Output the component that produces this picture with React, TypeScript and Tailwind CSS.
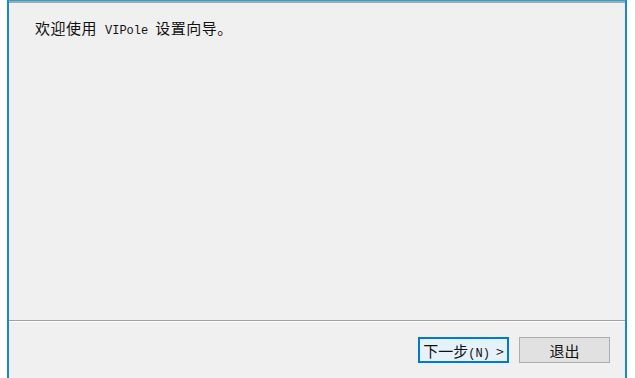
import React from "react";

const cjk = { fontFamily: '"Noto Sans CJK SC", "Noto Sans", sans-serif' };
const mono = { fontFamily: '"Liberation Mono", "DejaVu Sans Mono", monospace' };

export default function App() {
  return (
    <div className="w-[635px] h-[378px] bg-white flex overflow-hidden">
      <div className="ml-[7px] w-[620px] h-full flex flex-col border-l-2 border-r-2 border-t border-[#1a84dc] border-t-[#2aa0d8]">
        <div className="h-[2px] bg-[#a8a8a8]" />
        <div className="flex-1 bg-[#f0f0f0] flex flex-col">
          <div className="flex-1 pl-[26px] pt-[15px]">
            <div className="flex items-baseline text-[15px] leading-[20px] text-[#111]" style={cjk}>
              <span className="tracking-[0.5px]">欢迎使用</span>
              <span className="text-[12px] ml-[8px] mr-[7px] text-[#111]" style={mono}>VIPole</span>
              <span className="tracking-[0.5px]">设置向导。</span>
            </div>
          </div>
          <div className="h-px bg-[#a0a0a0]" />
          <div className="h-px bg-white" />
          <div className="h-[56px] flex justify-end items-start pt-[15px] pr-[15px] gap-[10px]">
            <button
              className="w-[91px] h-[26px] border-2 border-[#0078d7] bg-[#e5f1fb] flex items-baseline justify-center pt-[2px] text-[15px] text-[#111] leading-[20px]"
              style={cjk}
            >
              <span>下一步</span>
              <span className="text-[12px]" style={mono}>(N)</span>
              <span className="ml-[6px] text-[14px]">&gt;</span>
            </button>
            <button
              className="w-[91px] h-[26px] border border-[#adadad] bg-[#e1e1e1] flex items-center justify-center text-[15px] text-[#111] leading-none"
              style={cjk}
            >
              退出
            </button>
          </div>
        </div>
      </div>
    </div>
  );
}
